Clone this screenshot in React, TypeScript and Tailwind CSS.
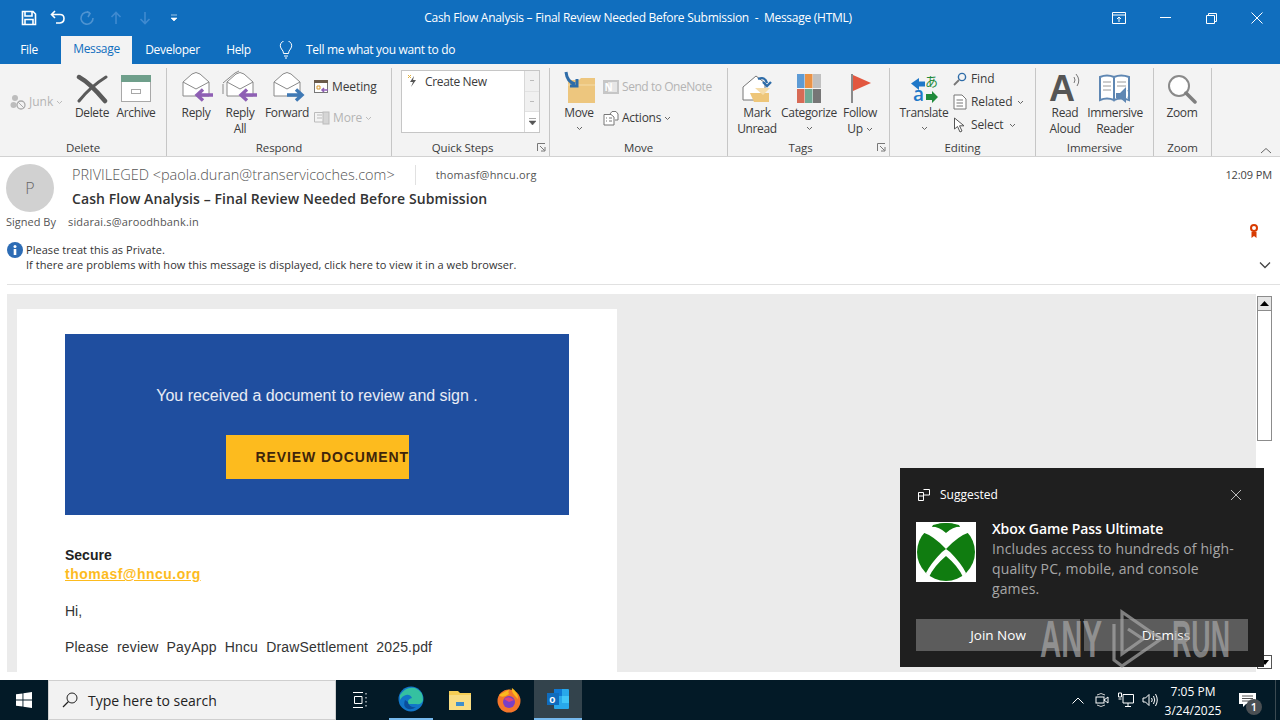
import React from "react";

const FONT = "[font-family:'Open_Sans','Noto_Sans',sans-serif]";

function Caret({ className = "" }: { className?: string }) {
  return (
    <svg width="7" height="5" viewBox="0 0 7 5" className={className}>
      <path d="M1 1l2.5 2.5L6 1" fill="none" stroke="currentColor" strokeWidth="1" />
    </svg>
  );
}

function Env({ color, dir = "left", stack = false }: { color: string; dir?: "left" | "right"; stack?: boolean }) {
  return (
    <svg width="44" height="33" viewBox="0 0 44 33" className="overflow-visible">
      {stack && <path d="M5 12 V22 M5 11 L17 1 L21 -1" fill="none" stroke="#8a8a8a" strokeWidth="1" />}
      <path d="M9 10 L18 2 Q22 -1 26 2 L35 10 V24 H9 Z" fill="#fff" stroke="#8a8a8a" strokeWidth="1" />
      <path d="M9 10 L22 17 L35 10" fill="none" stroke="#8a8a8a" strokeWidth="1" />
      {dir === "left" && <path d="M39 23 H25 M29 17.5 L23 23 L29 28.5" fill="none" stroke={color} strokeWidth="3.4" />}
      {dir === "right" && <path d="M22 23 H36 M31 17.5 L37 23 L31 28.5" fill="none" stroke={color} strokeWidth="3.4" />}
    </svg>
  );
}

function Big({ icon, label, label2, caret, w }: { icon: React.ReactNode; label: string; label2?: string; caret?: boolean; w: string }) {
  return (
    <div className={`${w} flex flex-col items-center shrink-0`}>
      <div className="h-[33px] flex items-center justify-center">{icon}</div>
      <div className="text-[12px] leading-[16px] text-[#3b3b3b] whitespace-nowrap tracking-[-0.35px]">{label}</div>
      {label2 && (
        <div className="text-[12px] leading-[16px] text-[#3b3b3b] whitespace-nowrap flex items-center gap-[3px] tracking-[-0.35px]">
          {label2}
          {caret && <Caret className="text-[#666]" />}
        </div>
      )}
      {!label2 && caret && <Caret className="text-[#666] mt-[5px]" />}
    </div>
  );
}

function Small({ icon, label, caret, dim, gap = "gap-[3px]", track = "tracking-[-0.1px]" }: { icon: React.ReactNode; label: string; caret?: boolean; dim?: boolean; gap?: string; track?: string }) {
  return (
    <div className={`flex items-center ${gap} text-[12px] leading-[16px] whitespace-nowrap ${track} ${dim ? "text-[#b4b4b4]" : "text-[#3b3b3b]"}`}>
      {icon}
      <span>{label}</span>
      {caret && <Caret className={dim ? "text-[#bbb]" : "text-[#666]"} />}
    </div>
  );
}

function Launcher() {
  return (
    <svg width="9" height="9" viewBox="0 0 9 9" className="absolute right-[3px] bottom-[4px]">
      <path d="M.5 8V.5H8M3 3l4.5 4.5M8 4v4H4" fill="none" stroke="#777" strokeWidth="1" />
    </svg>
  );
}

function Group({ w, label, pad, children, launcher }: { w: string; label: string; pad: string; children: React.ReactNode; launcher?: boolean }) {
  return (
    <div className={`${w} h-[88px] shrink-0 relative flex flex-col border-r border-[#c6c6c6]`}>
      <div className={`h-[68px] flex items-start ${pad}`}>{children}</div>
      <div className={`flex-1 flex items-center justify-center text-[11.5px] text-[#3b3b3b] pt-[3px] tracking-[-0.1px] ${launcher ? "pr-[16px]" : ""}`}>{label}</div>
      {launcher && <Launcher />}
    </div>
  );
}

function Xbox() {
  return (
    <svg width="60" height="60" viewBox="0 0 60 60" className="bg-white shrink-0">
      <circle cx="30" cy="30" r="29" fill="#107c10" />
      <path d="M30 11 Q24 5 14 4 L6 10 Q18 14 30 27 Q42 14 54 10 L46 4 Q36 5 30 11 Z" fill="#fff" />
      <path d="M17 3 Q30 -1 43 3 L44 5 Q36 4 30 9 Q24 4 16 5 Z" fill="#107c10" />
      <path d="M26 30 Q15 41 10 51 L13 55 Q18 44 30 34 Q42 44 47 55 L50 51 Q45 41 34 30 L30 27 Z" fill="#fff" />
    </svg>
  );
}

export default function App() {
  return (
    <div className={`w-[1280px] h-[720px] relative overflow-hidden bg-white flex flex-col ${FONT}`}>
      {/* Title bar */}
      <div className="h-[36px] bg-[#106ebe] flex items-center shrink-0 text-white relative">
        <div className="flex items-center w-[200px] h-full pl-[21px] gap-[13px]">
          <svg width="16" height="16" viewBox="0 0 16 16"><path d="M1.5 1.5H12L14.5 4V14.5H1.5Z M4 1.5V6H11V1.5 M4 14.5V9.5H12V14.5" fill="none" stroke="#fff" strokeWidth="1.6" /></svg>
          <svg width="16" height="16" viewBox="0 0 16 16"><path d="M5 1L1.5 4.5 5 8M2 4.5H10Q14 4.5 14 8.5T10 13H6" fill="none" stroke="#fff" strokeWidth="1.6" /></svg>
          <svg width="16" height="16" viewBox="0 0 16 16"><path d="M11 3A6 6 0 1 0 14 8M8 1.5L11 3.5L9 7" fill="none" stroke="#4e93d1" strokeWidth="1.6" /></svg>
          <svg width="16" height="16" viewBox="0 0 16 16"><path d="M8 14V3M3.5 7L8 2.5L12.5 7" fill="none" stroke="#3f8ad0" strokeWidth="1.6" /></svg>
          <svg width="16" height="16" viewBox="0 0 16 16"><path d="M8 2V13M3.5 9L8 13.5L12.5 9" fill="none" stroke="#3f8ad0" strokeWidth="1.6" /></svg>
          <svg width="16" height="16" viewBox="0 0 16 16"><path d="M5 5H11M5 8H11L8 11Z" fill="#fff" stroke="#fff" strokeWidth="0.6" /></svg>
        </div>
        <div className="flex-1 text-[12px] flex justify-center whitespace-pre tracking-[-0.27px]"><span className="relative left-[-10px]">Cash Flow Analysis – Final Review Needed Before Submission  -  Message (HTML)</span></div>
        <div className="flex items-center h-full w-[184px]">
          <div className="w-[46px] flex justify-center"><svg width="14" height="12" viewBox="0 0 14 12"><path d="M.5.5H13.5V11.5H.5ZM.5 3H13.5M7 10V5M5 7L7 5L9 7" fill="none" stroke="#fff" /></svg></div>
          <div className="w-[46px] flex justify-center"><svg width="11" height="2" viewBox="0 0 11 2"><path d="M0 .5H11" stroke="#fff" /></svg></div>
          <div className="w-[46px] flex justify-center"><svg width="11" height="11" viewBox="0 0 11 11"><path d="M.5 2.5H8.5V10.5H.5ZM2.5 2.5V.5H10.5V8.5H8.5" fill="none" stroke="#fff" /></svg></div>
          <div className="w-[46px] flex justify-center"><svg width="12" height="12" viewBox="0 0 12 12"><path d="M.5.5L11.5 11.5M11.5.5L.5 11.5" stroke="#fff" /></svg></div>
        </div>
      </div>
      {/* Tabs */}
      <div className="h-[28px] bg-[#106ebe] flex items-end shrink-0 text-[12px] text-white tracking-[-0.32px]">
        <div className="w-[58px] h-full flex items-center justify-center">File</div>
        <div className="w-[3px]" />
        <div className="w-[71px] h-[30px] -mt-[2px] bg-[#f3f3f3] text-[#106ebe] flex items-center justify-center">Message</div>
        <div className="w-[81px] h-full flex items-center justify-center">Developer</div>
        <div className="w-[51px] h-full flex items-center justify-center">Help</div>
        <div className="h-full flex items-center pl-[15px] gap-[13px]">
          <svg width="14" height="18" viewBox="0 0 14 18"><path d="M4.5 12.5Q4.5 10 2.5 8A5.5 5.5 0 1 1 11.5 8Q9.5 10 9.5 12.5ZM5 15H9M6 17H8" fill="none" stroke="#fff" strokeWidth="1" /></svg>
          <span>Tell me what you want to do</span>
        </div>
      </div>
      {/* Ribbon */}
      <div className="h-[93px] bg-[#f3f3f3] border-b border-[#d2d2d2] flex pt-[4px] shrink-0 relative">
        <Group w="w-[167px]" label="Delete" pad="pl-[10px] pt-[4px]">
          <div className="w-[60px] pt-[21px] flex items-center gap-[3px] text-[12px] text-[#b4b4b4]">
            <svg width="16" height="16" viewBox="0 0 16 16"><circle cx="5" cy="4" r="3" fill="#bdbdbd" /><circle cx="3.5" cy="11" r="3" fill="#bdbdbd" /><circle cx="11" cy="11" r="4" fill="none" stroke="#aaa" strokeWidth="1.3" /><path d="M8 8l6 6" stroke="#aaa" /></svg>
            <span>Junk</span>
            <Caret className="text-[#bbb]" />
          </div>
          <Big w="w-[44px]" label="Delete" icon={<svg width="32" height="30" viewBox="0 0 32 30"><path d="M3 3Q14 9 29 27" fill="none" stroke="#5a5a5a" strokeWidth="4.5" strokeLinecap="round" /><path d="M30 3Q14 13 3 27" fill="none" stroke="#5a5a5a" strokeWidth="3" strokeLinecap="round" /></svg>} />
          <Big w="w-[44px]" label="Archive" icon={<svg width="30" height="28" viewBox="0 0 30 28"><rect x=".5" y=".5" width="29" height="26" fill="#fff" stroke="#a8a8a8" /><rect x="0" y="0" width="30" height="7" fill="#6f9f8b" /><rect x="10.5" y="14.5" width="9" height="4" fill="none" stroke="#a8a8a8" /></svg>} />
        </Group>
        <Group w="w-[225px]" label="Respond" pad="pl-[7px] pt-[4px]">
          <Big w="w-[44px]" label="Reply" icon={<Env color="#8e5fb4" />} />
          <Big w="w-[44px]" label="Reply" label2="All" icon={<Env color="#8e5fb4" stack />} />
          <Big w="w-[50px]" label="Forward" icon={<Env color="#3f79b5" dir="right" />} />
          <div className="flex flex-col pt-[7px] pl-[2px] gap-[15px]">
            <Small label="Meeting" gap="gap-[3px]" icon={<svg width="15" height="14" viewBox="0 0 15 14"><rect x=".5" y=".5" width="13" height="12" fill="#fff" stroke="#777" /><rect y="0" width="14" height="3" fill="#6a5a4a" /><path d="M3 6h3v3H3z" fill="none" stroke="#d9982b" /><path d="M14 10H8M10 8L8 10L10 12" fill="none" stroke="#8e5fb4" strokeWidth="1.5" /></svg>} />
            <Small dim caret label="More" gap="gap-[3px]" icon={<svg width="16" height="16" viewBox="0 0 16 16"><path d="M.5 2.5H11V12H.5ZM3 5H8M3 8H8" fill="none" stroke="#bbb" /><rect x="9" y="2" width="6" height="12" fill="#d5d5d5" stroke="#bbb" /></svg>} />
          </div>
        </Group>
        <Group w="w-[158px]" label="Quick Steps" pad="pl-[9px] pt-[2px]" launcher>
          <div className="w-[139px] h-[63px] bg-white border border-[#c6c6c6] flex">
            <div className="flex-1 flex items-start pl-[5px] pt-[2px] gap-[6px] text-[12px] text-[#3b3b3b] tracking-[-0.35px]">
              <svg width="12" height="14" viewBox="0 0 12 14" className="mt-[1px]"><path d="M7 2L3 8H6L4 13L9 6H6Z" fill="#555" /><path d="M1 1l3 3M4 1L1 4" stroke="#e0b040" /></svg>
              <span>Create New</span>
            </div>
            <div className="w-[15px] border-l border-[#d8d8d8] flex flex-col">
              <div className="flex-1 border-b border-[#e2e2e2] bg-[#f0f0f0] flex items-center justify-center"><div className="w-[4px] h-[1px] bg-[#bbb]" /></div>
              <div className="flex-1 border-b border-[#e2e2e2] bg-[#f0f0f0] flex items-center justify-center"><div className="w-[4px] h-[1px] bg-[#bbb]" /></div>
              <div className="flex-1 flex items-center justify-center"><svg width="7" height="8" viewBox="0 0 7 8"><path d="M0 .5H7M0 3H7L3.5 7Z" fill="#555" stroke="#555" strokeWidth=".5" /></svg></div>
            </div>
          </div>
        </Group>
        <Group w="w-[178px]" label="Move" pad="pl-[7px] pt-[4px]">
          <Big w="w-[44px]" caret label="Move" icon={<svg width="34" height="32" viewBox="0 0 34 32" className="overflow-visible"><path d="M6 7H17L19 5H33V30H6Z" fill="#edc67e" /><path d="M6 12H33" stroke="#f5dca8" /><path d="M4 -1Q5 9 13 11M8 13H15V6" fill="none" stroke="#2e6ca8" strokeWidth="3" /></svg>} />
          <div className="flex flex-col pt-[7px] gap-[15px] pl-[2px]">
            <Small dim label="Send to OneNote" track="tracking-[-0.45px]" icon={<svg width="16" height="16" viewBox="0 0 16 16"><rect x="0" y="1" width="16" height="14" fill="#c6c6c6" /><rect x="5" y="3" width="9" height="10" fill="#e6e6e6" /><text x="1.5" y="12" fontSize="10" fontWeight="700" fill="#fff">N</text></svg>} />
            <Small caret label="Actions" track="tracking-[-0.25px]" icon={<svg width="16" height="16" viewBox="0 0 16 16"><path d="M1 4.5H8L11 7V15H1ZM3 8H4M6 8H9M3 11H4M6 11H9M7 4L9 1.5H13L15 4V10H12" fill="#fff" stroke="#777" /></svg>} />
          </div>
        </Group>
        <Group w="w-[162px]" label="Tags" pad="pl-[6px] pt-[4px]" launcher>
          <Big w="w-[46px]" label="Mark" label2="Unread" icon={<svg width="32" height="32" viewBox="0 0 32 32"><path d="M2 14L15 3L24 10V16L15 27H2Z" fill="#fff" stroke="#777" /><path d="M9 20H28V29H13Z" fill="#eec679" /><path d="M14 15L22 22L29 15" fill="#f5dca8" /><path d="M17 6Q24 3 26 10M22 9L26 13L30 9" fill="none" stroke="#2e6ca8" strokeWidth="2.4" /></svg>} />
          <Big w="w-[58px]" caret label="Categorize" icon={<svg width="24" height="30" viewBox="0 0 24 30"><rect x="0" y="0" width="7.5" height="14" fill="#5d9bd5" /><rect x="8" y="0" width="7.5" height="14" fill="#e99246" /><rect x="16" y="0" width="8" height="14" fill="#c0c0c0" /><rect x="0" y="15" width="7.5" height="14" fill="#d76a55" /><rect x="8" y="15" width="7.5" height="14" fill="#70a894" /><rect x="16" y="15" width="8" height="14" fill="#767676" /></svg>} />
          <Big w="w-[44px]" label="Follow" label2="Up" caret icon={<svg width="24" height="32" viewBox="0 0 24 32"><rect x="3" y="1" width="2" height="29" fill="#8a8a8a" /><path d="M5 2L23 10L5 18Z" fill="#e2573f" /></svg>} />
        </Group>
        <Group w="w-[146px]" label="Editing" pad="pl-[11px] pt-[4px]">
          <Big w="w-[46px]" caret label="Translate" icon={<svg width="30" height="30" viewBox="0 0 30 30" className="overflow-visible"><path d="M2 9.5L10 4V7.5H16V12.5H10V16Z" fill="#1f78c8" /><text x="16" y="12" fontSize="13" fill="#1f8a3a" fontFamily="'Noto Sans CJK JP',sans-serif">あ</text><text x="4" y="27" fontSize="19" fontWeight="600" fill="#1f78c8" fontFamily="'Open Sans',sans-serif">a</text><path d="M17 20H23V17L29 23L23 29V26H17Z" fill="#1f8a3a" /></svg>} />
          <div className="flex flex-col -mt-[1px] gap-[7px] pl-[6px]">
            <Small label="Find" gap="gap-[4px]" icon={<svg width="14" height="14" viewBox="0 0 14 14"><circle cx="9" cy="5" r="3.6" fill="none" stroke="#2e6ca8" strokeWidth="1.4" /><path d="M6 8L1 13" stroke="#777" strokeWidth="1.8" /></svg>} />
            <Small caret label="Related" gap="gap-[4px]" icon={<svg width="14" height="16" viewBox="0 0 14 16"><path d="M1 1H9L13 5V15H1ZM3.5 6H10M3.5 9H10M3.5 12H10" fill="#fff" stroke="#777" /></svg>} />
            <Small caret label="Select" gap="gap-[5px]" icon={<svg width="13" height="16" viewBox="0 0 13 16"><path d="M1.5 1V12L4.5 9.5L7 15L9 14L6.5 8.8H11Z" fill="#fff" stroke="#555" /></svg>} />
          </div>
        </Group>
        <Group w="w-[118px]" label="Immersive" pad="pl-[6px] pt-[4px]">
          <Big w="w-[46px]" label="Read" label2="Aloud" icon={<div className="relative w-[32px] h-[30px]"><span className="absolute left-0 top-0 text-[36px] leading-[30px] font-bold tracking-normal text-[#555] [font-family:'Liberation_Sans',sans-serif]">A</span><svg width="8" height="14" viewBox="0 0 8 14" className="absolute right-0 top-0"><path d="M1 9Q3 6 1 3M4 12Q8 6 3 0" fill="none" stroke="#777" /></svg></div>} />
          <Big w="w-[54px]" label="Immersive" label2="Reader" icon={<svg width="32" height="30" viewBox="0 0 32 30"><path d="M1 3Q8 0 15 3V26Q8 23 1 26ZM15 3Q22 0 30 3V26Q22 23 15 26Z" fill="#fff" stroke="#5f87b3" strokeWidth="2" /><path d="M4 8H12M4 12H12M4 16H12M18 8H27M18 12H27" stroke="#9a9a9a" /><path d="M17 19H21L27 13V29L21 24H17Z" fill="#5f87b3" /><path d="M29 16Q31 20 29 24" fill="none" stroke="#5f87b3" /></svg>} />
        </Group>
        <Group w="w-[58px]" label="Zoom" pad="pl-[6px] pt-[4px]">
          <Big w="w-[44px]" label="Zoom" icon={<svg width="30" height="30" viewBox="0 0 30 30"><circle cx="12" cy="12" r="10" fill="#fff" stroke="#8a8a8a" strokeWidth="2" /><path d="M19 19L28 28" stroke="#7f7f7f" strokeWidth="3.5" strokeLinecap="round" /></svg>} />
        </Group>
        <svg width="12" height="7" viewBox="0 0 12 7" className="absolute right-[8px] bottom-[2px]"><path d="M1 6L6 1.5L11 6" fill="none" stroke="#666" /></svg>
      </div>
      {/* Message header */}
      <div className="h-[137px] shrink-0 bg-white flex flex-col relative">
        <div className="h-[128px] flex flex-col border-b border-[#e1e1e1] ml-[7px]">
          <div className="flex h-[57px] -ml-[1px] pt-[7px] items-start">
            <div className="w-[48px] h-[48px] rounded-full bg-[#d1d1d1] flex items-center justify-center text-[16px] text-[#666] shrink-0 font-light">P</div>
            <div className="pl-[18px] flex flex-col flex-1">
              <div className="flex items-center h-[22px]">
                <span className="text-[14.5px] text-[#555] font-light whitespace-nowrap">PRIVILEGED &lt;paola.duran@transervicoches.com&gt;</span>
                <div className="w-px h-[20px] bg-[#e1e1e1] ml-[20px] mr-[20px]" />
                <span className="text-[11px] text-[#555] tracking-[0.2px]">thomasf@hncu.org</span>
                <span className="ml-auto mr-[8px] text-[11px] text-[#444] tracking-[-0.1px]">12:09 PM</span>
              </div>
              <div className="text-[14px] font-semibold text-[#333] leading-[20px] mt-[3px] tracking-[0.08px]">Cash Flow Analysis – Final Review Needed Before Submission</div>
            </div>
          </div>
          <div className="flex text-[11px] leading-[14px] text-[#555] mt-[1px] -ml-[1px] h-[14px]">
            <span className="w-[62px]">Signed By</span>
            <span className="tracking-[0.15px]">sidarai.s@aroodhbank.in</span>
          </div>
          <div className="flex mt-[7px] flex-1">
            <svg width="16" height="16" viewBox="0 0 16 16" className="mt-[6px] shrink-0"><circle cx="8" cy="8" r="8" fill="#2d6cb5" /><rect x="6.7" y="7" width="2.6" height="6" fill="#fff" /><circle cx="8" cy="4.5" r="1.5" fill="#fff" /></svg>
            <div className="pl-[3px] pt-[7px] text-[11px] leading-[14.6px] text-[#333] tracking-[0.04px]">
              <div>Please treat this as Private.</div>
              <div>If there are problems with how this message is displayed, click here to view it in a web browser.</div>
            </div>
            <div className="ml-auto flex flex-col items-end pr-[8px] -mt-[12px]">
              <svg width="8" height="15" viewBox="0 0 8 15" className="mr-[14px]"><circle cx="4" cy="4" r="3" fill="none" stroke="#d83b01" strokeWidth="2" /><path d="M1.5 8V14L4 12L6.5 14V8" fill="#d83b01" /></svg>
              <svg width="12" height="8" viewBox="0 0 12 8" className="mt-[22px] mr-[1px]"><path d="M1 1.5L6 6.5L11 1.5" fill="none" stroke="#444" strokeWidth="1.3" /></svg>
            </div>
          </div>
        </div>
      </div>
      {/* Body */}
      <div className="h-[378px] shrink-0 bg-white pl-[7px] pr-[8px] flex">
        <div className="flex-1 bg-[#ebebeb] flex overflow-hidden pt-[15px] pl-[10px]">
          <div className="w-[600px] h-[400px] bg-white pl-[48px] pt-[25px] [font-family:'Liberation_Sans',sans-serif] shrink-0">
            <div className="w-[504px] h-[181px] bg-[#1f4e9f] flex flex-col items-center pt-[52px]">
              <div className="text-[16px] leading-[20px] text-white/90 font-light tracking-[-0.02px]">You received a document to review and sign .</div>
              <div className="w-[183px] h-[44px] bg-[#fdbb1e] mt-[29px] flex items-center pl-[30px] text-[14px] font-bold text-[#40250a] whitespace-nowrap overflow-hidden tracking-[0.9px]">REVIEW DOCUMENT</div>
            </div>
            <div className="text-[14px] font-bold leading-[20px] text-[#222] mt-[30px]">Secure</div>
            <div className="text-[14px] font-bold leading-[18px] text-[#fdbb1e] underline tracking-[0.48px]">thomasf@hncu.org</div>
            <div className="text-[14px] leading-[20px] text-[#333] mt-[18px]">Hi,</div>
            <div className="text-[14px] leading-[20px] text-[#333] mt-[16px] whitespace-pre tracking-[0.17px]">Please  review  PayApp  Hncu  DrawSettlement  2025.pdf</div>
          </div>
        </div>
        <div className="w-[16px] shrink-0 bg-white pl-[1px] flex flex-col pt-[2px] pb-[3px]">
          <div className="h-[15px] border border-[#8c8c8c] bg-[#e6e6e6] flex items-center justify-center"><svg width="9" height="5" viewBox="0 0 9 5"><path d="M4.5 0L9 5H0Z" fill="#000" /></svg></div>
          <div className="h-[130px] border-x border-b border-[#8c8c8c] bg-white" />
          <div className="flex-1" />
          <div className="h-[14px] border border-[#555] bg-white flex items-center justify-center"><svg width="8" height="5" viewBox="0 0 8 5"><path d="M4 5L8 0H0Z" fill="#000" /></svg></div>
        </div>
      </div>
      <div className="h-[8px] shrink-0 bg-white" />
      {/* Taskbar */}
      <div className="h-[40px] shrink-0 bg-[#031a27] flex items-center text-white">
        <div className="w-[48px] h-full flex items-center justify-center">
          <svg width="16" height="16" viewBox="0 0 16 16"><path d="M0 2.3L6.5 1.4V7.6H0ZM7.4 1.3L16 0V7.6H7.4ZM0 8.4H6.5V14.6L0 13.7ZM7.4 8.4H16V16L7.4 14.7Z" fill="#fff" /></svg>
        </div>
        <div className="w-[288px] h-full bg-[#f2f2f2] border border-[#cfcfcf] flex items-center pl-[13px] gap-[10px] text-[14px] text-[#222]">
          <svg width="16" height="16" viewBox="0 0 16 16"><circle cx="10" cy="6" r="5" fill="none" stroke="#222" /><path d="M6.5 9.5L1 15" stroke="#222" strokeWidth="1.2" /></svg>
          <span>Type here to search</span>
        </div>
        <div className="w-[48px] h-full flex items-center justify-center">
          <svg width="16" height="16" viewBox="0 0 16 16"><path d="M1 .5H11M1 15.5H11M2.5 4.5H10V11.5H2.5ZM14 1v1.5M14 5v1.5M14 9v1.5M14 13v1.5" fill="none" stroke="#fff" /></svg>
        </div>
        <div className="w-[3px]" />
        <div className="w-[48px] h-full flex flex-col items-center">
          <div className="flex-1 flex items-center justify-center">
            <svg width="26" height="26" viewBox="0 0 26 26"><circle cx="13" cy="13" r="12.5" fill="#1276c8" /><path d="M2 9Q8 0 17 2Q25 5 25 14Q24 19 18 18H10Q9 13 14 12Q12 8 8 9Q4 10 2 14Z" fill="#35c1a0" /><path d="M10 16Q11 22 18 21Q13 25 8 22Q5 19 7 14Z" fill="#0a4f9c" /></svg>
          </div>
          <div className="w-[44px] h-[2px] bg-[#76b9ed]" />
        </div>
        <div className="w-[1px]" />
        <div className="w-[48px] h-full flex items-center justify-center">
          <svg width="22" height="20" viewBox="0 0 22 20"><path d="M0 1H9L11 3H22V20H0Z" fill="#f6ce55" /><rect x="0" y="5" width="22" height="15" fill="#f9dd83" /><rect x="7" y="12" width="8" height="4" fill="#3f8fcc" /></svg>
        </div>
        <div className="w-[1px]" />
        <div className="w-[48px] h-full flex items-center justify-center">
          <svg width="26" height="26" viewBox="0 0 26 26"><circle cx="13" cy="14" r="11.5" fill="#f5762a" /><path d="M3 8Q6 12 13 7Q11 3 16 1Q15 6 22 12Q22 5 16 1" fill="#fbb91d" /><circle cx="13" cy="15" r="6" fill="#7a3fc4" /><path d="M8 12Q13 8 18 13L13 15Z" fill="#e3447a" /></svg>
        </div>
        <div className="w-[1px]" />
        <div className="w-[48px] h-full bg-[#33434c] flex items-center justify-center border-b-2 border-[#76b9ed]">
          <svg width="24" height="24" viewBox="0 0 24 24"><rect x="8" y="2" width="15" height="20" rx="1" fill="#28a8ea" /><rect x="8" y="2" width="8" height="7" fill="#0f78d4" /><rect x="16" y="9" width="7" height="7" fill="#50d9ff" opacity=".6" /><rect x="1" y="6" width="12" height="12" fill="#0f6cbd" /><text x="3.2" y="15.5" fontSize="10" fontWeight="700" fill="#fff" fontFamily="'Liberation Sans',sans-serif">o</text></svg>
        </div>
        <div className="flex-1" />
        <div className="flex items-center h-full">
          <div className="w-[24px] flex justify-center"><svg width="12" height="7" viewBox="0 0 12 7"><path d="M.5 6.5L6 1L11.5 6.5" fill="none" stroke="#fff" /></svg></div>
          <div className="w-[24px] flex justify-center"><svg width="14" height="16" viewBox="0 0 14 16"><path d="M2 3Q6 0 10 3M2 13Q6 16 10 13" fill="none" stroke="#ccc" /><rect x="1" y="5" width="8" height="6" fill="none" stroke="#fff" /><path d="M9 8L13 5V11Z" fill="none" stroke="#fff" /></svg></div>
          <div className="w-[24px] flex justify-center"><svg width="16" height="16" viewBox="0 0 16 16"><path d="M5 2.5H15.5V11H5ZM10 11V14M7 14.5H13M.5 1H3.5V5H.5ZM.5 7H3.5" fill="none" stroke="#fff" /></svg></div>
          <div className="w-[24px] flex justify-center"><svg width="16" height="14" viewBox="0 0 16 14"><path d="M1 5H3.5L7 1.5V12.5L3.5 9H1ZM9.5 5Q11 7 9.5 9M11.5 3Q14 7 11.5 11M13.5 1Q17 7 13.5 13" fill="none" stroke="#fff" /></svg></div>
          <div className="w-[62px] flex flex-col items-center text-[12px] leading-[19px] pt-[1px]"><div>7:05 PM</div><div>3/24/2025</div></div>
          <div className="w-[48px] h-full flex items-center justify-center relative ml-[1px]">
            <svg width="17" height="15" viewBox="0 0 17 15" className="relative left-[-2px]"><path d="M0 0H17V11H7L4 14V11H0Z" fill="#fff" /><path d="M3 3H14M3 5.5H14M3 8H11" stroke="#555" /></svg>
            <div className="absolute right-[11px] bottom-[5px] w-[16px] h-[16px] rounded-full bg-[#4a4f53] flex items-center justify-center text-[11px] font-semibold text-white">1</div>
          </div>
          <div className="w-[5px] h-full border-l border-[#3b4a52] ml-[2px]" />
        </div>
      </div>
      {/* Toast */}
      <div className="absolute left-[900px] top-[468px] w-[364px] h-[199px] bg-[#1f1f1f] px-[16px] pt-[17px] text-white">
        <div className="flex items-center h-[20px]">
          <svg width="12" height="12" viewBox="0 0 12 12" className="ml-[2px]"><path d="M.5 3.5H5.5V11.5H.5ZM5.5.5H11.5V6H5.5M.5 7H5.5" fill="none" stroke="#fff" /></svg>
          <span className="text-[12px] pl-[10px]">Suggested</span>
          <svg width="10" height="10" viewBox="0 0 10 10" className="ml-auto mr-[7px]"><path d="M0 0L10 10M10 0L0 10" stroke="#bbb" /></svg>
        </div>
        <div className="flex mt-[17px] h-[97px]">
          <Xbox />
          <div className="pl-[16px] flex flex-col">
            <div className="text-[14px] font-semibold leading-[14px] tracking-[-0.1px]">Xbox Game Pass Ultimate</div>
            <div className="text-[14px] leading-[20px] text-[#a6a6a6] mt-[3px] tracking-[0.12px]">Includes access to hundreds of high-<br />quality PC, mobile, and console<br />games.</div>
          </div>
        </div>
        <div className="flex gap-[4px] text-[13.5px]">
          <div className="w-[164px] h-[32px] bg-[#5c5c5c] flex items-center justify-center">Join Now</div>
          <div className="w-[164px] h-[32px] bg-[#5c5c5c] flex items-center justify-center">Dismiss</div>
        </div>
      </div>
      {/* Watermark */}
      <div className="absolute left-[1040px] top-[608px] w-[190px] h-[62px] flex items-center text-[#a8a8a8]/70 [font-family:'Liberation_Sans',sans-serif] font-bold text-[52px] leading-[62px]">
        <span className="inline-block w-[63px] origin-left scale-x-[0.565] whitespace-nowrap">ANY</span>
        <svg width="56" height="62" viewBox="0 0 56 62" className="ml-[6px] shrink-0"><path d="M5 16V52L13 58L52 31L13 4V46L34 31L19 21" fill="none" stroke="currentColor" strokeWidth="3.2" /></svg>
        <span className="inline-block w-[58px] ml-[7px] origin-left scale-x-[0.515] whitespace-nowrap">RUN</span>
      </div>
    </div>
  );
}
